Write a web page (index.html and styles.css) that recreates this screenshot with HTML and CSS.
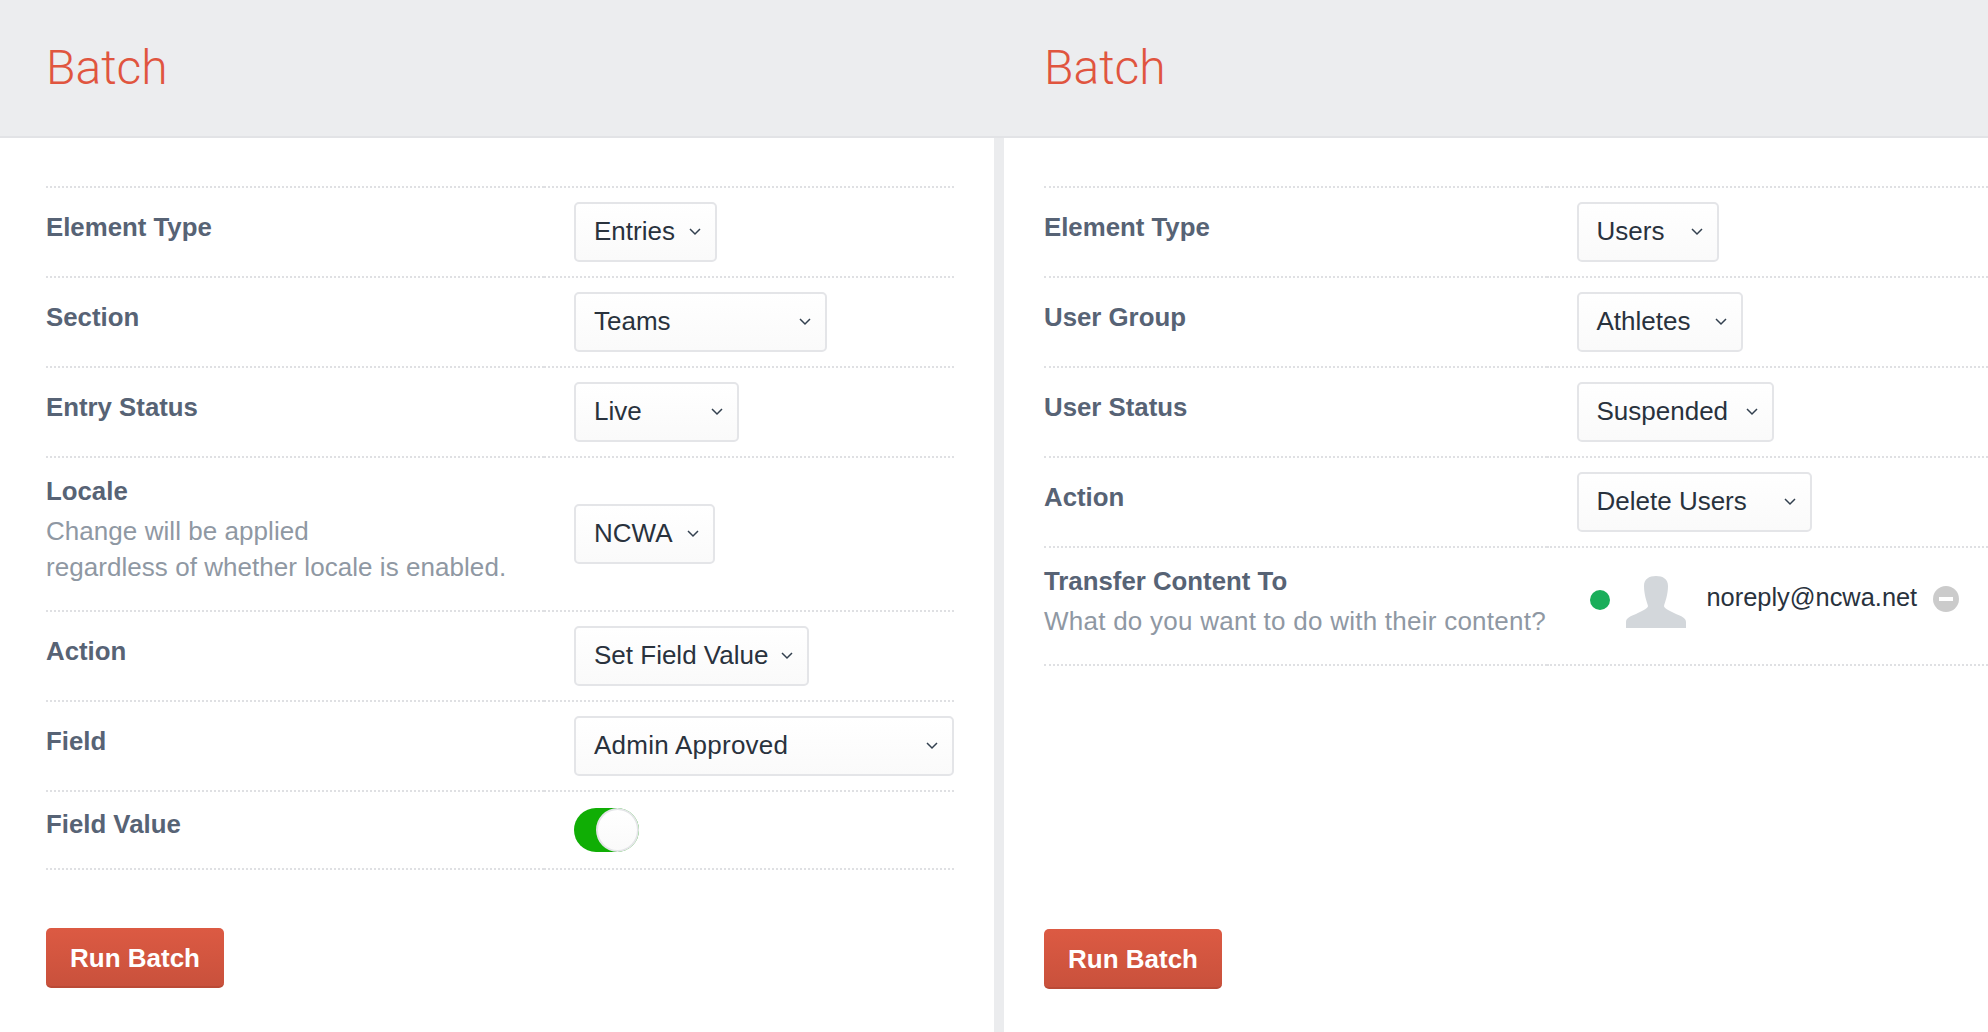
FILE: index.html
```html
<!DOCTYPE html>
<html lang="en">
<head>
<meta charset="utf-8">
<title>Batch</title>
<link rel="stylesheet" href="styles.css">
</head>
<body>
<div class="page">
  <section class="panel panel-left">
    <header class="panel-head"><h1>Batch</h1></header>
    <div class="panel-body">
      <table class="form">
        <tr><th>Element Type</th><td><div class="select w-entries"><span>Entries</span><svg class="chev" viewBox="0 0 12 8"><polyline points="1,1 6,6 11,1"/></svg></div></td></tr>
        <tr><th>Section</th><td><div class="select w-teams"><span>Teams</span><svg class="chev" viewBox="0 0 12 8"><polyline points="1,1 6,6 11,1"/></svg></div></td></tr>
        <tr><th>Entry Status</th><td><div class="select w-live"><span>Live</span><svg class="chev" viewBox="0 0 12 8"><polyline points="1,1 6,6 11,1"/></svg></div></td></tr>
        <tr><th class="with-note tall">Locale<p>Change will be applied<br>regardless of whether locale is enabled.</p></th><td><div class="select w-ncwa"><span>NCWA</span><svg class="chev" viewBox="0 0 12 8"><polyline points="1,1 6,6 11,1"/></svg></div></td></tr>
        <tr><th>Action</th><td><div class="select w-set"><span>Set Field Value</span><svg class="chev" viewBox="0 0 12 8"><polyline points="1,1 6,6 11,1"/></svg></div></td></tr>
        <tr><th>Field</th><td><div class="select w-full"><span>Admin Approved</span><svg class="chev" viewBox="0 0 12 8"><polyline points="1,1 6,6 11,1"/></svg></div></td></tr>
        <tr class="row-toggle"><th>Field Value</th><td><div class="toggle"><div class="knob"></div></div></td></tr>
      </table>
      <button class="run">Run Batch</button>
    </div>
  </section>
  <section class="panel panel-right">
    <header class="panel-head"><h1>Batch</h1></header>
    <div class="panel-body">
      <table class="form">
        <tr><th>Element Type</th><td><div class="select w-users"><span>Users</span><svg class="chev" viewBox="0 0 12 8"><polyline points="1,1 6,6 11,1"/></svg></div></td></tr>
        <tr><th>User Group</th><td><div class="select w-athletes"><span>Athletes</span><svg class="chev" viewBox="0 0 12 8"><polyline points="1,1 6,6 11,1"/></svg></div></td></tr>
        <tr><th>User Status</th><td><div class="select w-suspended"><span>Suspended</span><svg class="chev" viewBox="0 0 12 8"><polyline points="1,1 6,6 11,1"/></svg></div></td></tr>
        <tr><th>Action</th><td><div class="select w-delete"><span>Delete Users</span><svg class="chev" viewBox="0 0 12 8"><polyline points="1,1 6,6 11,1"/></svg></div></td></tr>
        <tr class="row-user"><th class="with-note">Transfer Content To<p class="wide">What do you want to do with their content?</p></th>
          <td><div class="user">
            <span class="dot"></span>
            <svg class="avatar" viewBox="0 0 60 52"><path d="M30 0C37 0 42 3 42 10C42 19 39 26 38 30C38 33 45 35 50 38C55 40 60 42 60 46V52H0V46C0 42 5 40 10 38C15 35 22 33 22 30C21 26 18 19 18 10C18 3 23 0 30 0Z"/></svg>
            <span class="email">noreply@ncwa.net</span>
            <span class="remove"><i></i></span>
          </div></td></tr>
      </table>
      <button class="run">Run Batch</button>
    </div>
  </section>
</div>
</body>
</html>
```
FILE: styles.css
```css
* { box-sizing: border-box; }
html, body { margin: 0; height: 100%; }
body {
  background: #ebecee;
  font-family: "Liberation Sans", Arial, sans-serif;
  font-size: 26px;
  color: #29323d;
  overflow: hidden;
}
.page { display: flex; gap: 10px; height: 1032px; }
.panel { display: flex; flex-direction: column; background: #fff; }
.panel-left { width: 994px; }
.panel-right { width: 984px; }
.panel-head {
  height: 138px;
  margin-right: -5px;
  background: #ecedef;
  border-bottom: 2px solid #e2e3e6;
  padding: 36px 0 0 46px;
}
.panel-right .panel-head { margin-left: -5px; margin-right: 0; padding-left: 45px; }
.panel-head h1 {
  margin: 0;
  font-family: "Roboto", "Liberation Sans", sans-serif;
  font-weight: 300;
  font-size: 48px;
  line-height: 64px;
  color: #e0553f;
}
.panel-body {
  flex: 1;
  display: flex;
  flex-direction: column;
  align-items: flex-start;
  padding: 48px 40px 44px 46px;
}
.panel-right .panel-body { padding: 48px 0 43px 40px; }
.form { border-spacing: 0; width: 100%; table-layout: fixed; }
.panel-left .form th { width: 498px; }
.panel-right .form th { width: 502.5px; }
.form th, .form td { border-top: 2px dotted #dfe0e3; }
.form tr:last-child th, .form tr:last-child td { border-bottom: 2px dotted #dfe0e3; }
.form th {
  padding: 21px 0 0;
  text-align: left;
  vertical-align: top;
  font-weight: 700;
  font-size: 25.8px;
  line-height: 36px;
  color: #576375;
}
.form th p {
  margin: 4px 0 0;
  font-size: 26px;
  font-weight: 400;
  color: #8f98a3;
  line-height: 36px;
  letter-spacing: .05px;
}
.form th p.wide { letter-spacing: .25px; }
.form th.with-note { padding-top: 15px; padding-bottom: 25px; }
.form td { padding: 14px 0 14px 30px; vertical-align: middle; }
.select {
  display: flex;
  align-items: center;
  justify-content: space-between;
  height: 60px;
  padding: 0 14px 0 18px;
  border: 2px solid #e4e5e8;
  border-radius: 5px;
  background: linear-gradient(#fff, #fafafa);
}
.select span { position: relative; top: -1px; }
.chev { width: 12px; height: 8px; flex: none; }
.chev polyline { fill: none; stroke: #33404f; stroke-width: 1.5; }
.w-entries { width: 143px; }
.w-teams { width: 253px; }
.w-live { width: 165px; }
.w-ncwa { width: 141px; }
.w-set { width: 235px; }
.w-full { width: 100%; }
.w-full span { letter-spacing: .25px; }
.w-users { width: 142.5px; }
.w-athletes { width: 166.5px; }
.w-suspended { width: 197.5px; }
.w-delete { width: 235.5px; }
.row-toggle th { padding-top: 14px; }
.row-toggle td { padding: 16px 0 16px 30px; }
.toggle {
  position: relative;
  width: 65px;
  height: 44px;
  border-radius: 22px;
  background: #10ae05;
}
.knob {
  position: absolute;
  top: 0;
  right: 0;
  width: 43px;
  height: 44px;
  border-radius: 50%;
  border: 2px solid #e4e5e8;
  background: linear-gradient(#fff, #fafafa);
}
.row-user td { padding: 28px 0 0 30px; vertical-align: top; }
.user { display: flex; align-items: flex-start; width: 382px; }
.dot {
  flex: none;
  width: 20px;
  height: 20px;
  margin: 14px 0 0 13px;
  border-radius: 50%;
  background: #1aae5a;
}
.avatar { flex: none; width: 60px; height: 52px; margin-left: 16px; fill: #d3d7db; }
.email { margin-left: 21px; font-size: 25.4px; line-height: 42px; color: #29323d; }
.remove {
  flex: none;
  display: flex;
  align-items: center;
  justify-content: center;
  width: 26px;
  height: 26px;
  margin: 10px 0 0 auto;
  border-radius: 50%;
  background: #cbcbcb;
}
.remove i { width: 14px; height: 4px; background: #fff; }
.run {
  margin-top: auto;
  width: 178px;
  height: 60px;
  padding: 0;
  border: 0;
  border-bottom: 2px solid #ba4a36;
  border-radius: 5px;
  background: linear-gradient(#dc5a43, #c9513c);
  color: #fff;
  font: 700 26px/60px "Liberation Sans", Arial, sans-serif;
}
```
